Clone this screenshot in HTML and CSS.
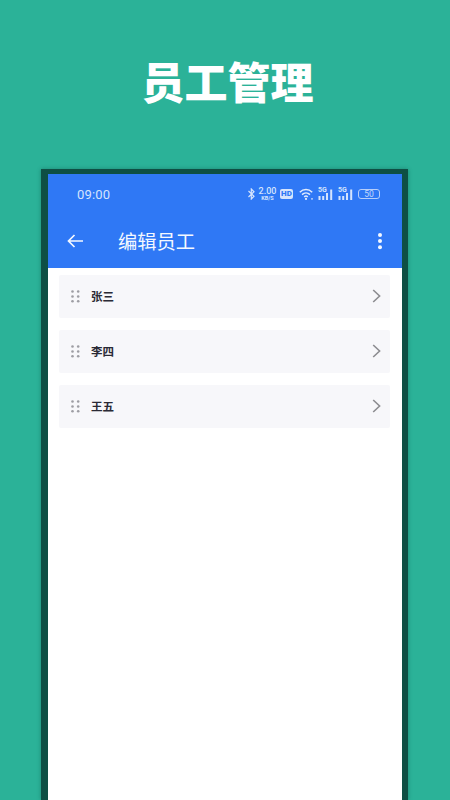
FILE: index.html
```html
<!DOCTYPE html>
<html lang="zh">
<head>
<meta charset="utf-8">
<title>员工管理</title>
<link rel="stylesheet" href="styles.css">
</head>
<body>
<header class="hero"><h1>员工管理</h1></header>
<div class="frame">
  <div class="screen">
    <div class="top">
      <div class="status">
        <span class="time">09:00</span>
        <div class="icons">
          <svg class="bt" width="7" height="12" viewBox="0 0 7 12"><path d="M0.5 3L6 8.2L3.3 11V1L6 3.8L0.5 9" fill="none" stroke="#d5e4fd" stroke-width="1.2"/></svg>
          <div class="speed"><span class="num">2.00</span><span class="unit">KB/S</span></div>
          <span class="hd">HD</span>
          <svg class="wifi" width="15" height="12" viewBox="0 0 15 12"><g fill="none" stroke="#e2ecfe" stroke-width="1.5"><path d="M0.8 4.2C4.4 .6 9.6 .6 13.2 4.2"/><path d="M3 6.6C5.3 4.4 8.7 4.4 11 6.6"/><path d="M5.2 8.8C6.4 7.8 7.6 7.8 8.8 8.8"/></g><circle cx="7" cy="10.9" r="1.1" fill="#e2ecfe"/><circle cx="13" cy="10.9" r=".8" fill="#e2ecfe"/></svg>
          <div class="sig"><span class="g">5G</span><svg width="15" height="12" viewBox="0 0 15 12"><g fill="#d5e4fd"><rect x="0.5" y="8" width="2" height="4"/><rect x="4.2" y="8" width="2" height="4"/><rect x="8" y="5" width="2" height="7"/><rect x="12.2" y="1.5" width="2" height="10.5"/></g></svg></div>
          <div class="sig"><span class="g">5G</span><svg width="15" height="12" viewBox="0 0 15 12"><g fill="#d5e4fd"><rect x="0.5" y="8" width="2" height="4"/><rect x="4.2" y="8" width="2" height="4"/><rect x="8" y="5" width="2" height="7"/><rect x="12.2" y="1.5" width="2" height="10.5"/></g></svg></div>
          <div class="batt"><span class="lvl">50</span></div>
        </div>
      </div>
      <div class="bar">
        <svg class="back" width="17" height="14" viewBox="0 0 17 14"><path d="M16 7H1.5M7.5 1L1.5 7L7.5 13" fill="none" stroke="#f4f8ff" stroke-width="1.7"/></svg>
        <span class="title">编辑员工</span>
        <svg class="more" width="6" height="18" viewBox="0 0 6 18"><circle cx="3" cy="3" r="2" fill="#f4f8ff"/><circle cx="3" cy="9" r="2" fill="#f4f8ff"/><circle cx="3" cy="15.2" r="2" fill="#f4f8ff"/></svg>
      </div>
    </div>
    <ul class="list">
      <li class="row">
        <svg class="grip" width="9" height="13" viewBox="0 0 9 13"><g fill="#9d9da3"><circle cx="1.5" cy="1.5" r="1.3"/><circle cx="7.2" cy="1.5" r="1.3"/><circle cx="1.5" cy="6.5" r="1.3"/><circle cx="7.2" cy="6.5" r="1.3"/><circle cx="1.5" cy="11.3" r="1.3"/><circle cx="7.2" cy="11.3" r="1.3"/></g></svg>
        <span class="name">张三</span>
        <svg class="chev" width="9" height="14" viewBox="0 0 9 14"><path d="M1.2 1L7.6 7L1.2 13" fill="none" stroke="#8c8c90" stroke-width="1.6"/></svg>
      </li>
      <li class="row">
        <svg class="grip" width="9" height="13" viewBox="0 0 9 13"><g fill="#9d9da3"><circle cx="1.5" cy="1.5" r="1.3"/><circle cx="7.2" cy="1.5" r="1.3"/><circle cx="1.5" cy="6.5" r="1.3"/><circle cx="7.2" cy="6.5" r="1.3"/><circle cx="1.5" cy="11.3" r="1.3"/><circle cx="7.2" cy="11.3" r="1.3"/></g></svg>
        <span class="name">李四</span>
        <svg class="chev" width="9" height="14" viewBox="0 0 9 14"><path d="M1.2 1L7.6 7L1.2 13" fill="none" stroke="#8c8c90" stroke-width="1.6"/></svg>
      </li>
      <li class="row">
        <svg class="grip" width="9" height="13" viewBox="0 0 9 13"><g fill="#9d9da3"><circle cx="1.5" cy="1.5" r="1.3"/><circle cx="7.2" cy="1.5" r="1.3"/><circle cx="1.5" cy="6.5" r="1.3"/><circle cx="7.2" cy="6.5" r="1.3"/><circle cx="1.5" cy="11.3" r="1.3"/><circle cx="7.2" cy="11.3" r="1.3"/></g></svg>
        <span class="name">王五</span>
        <svg class="chev" width="9" height="14" viewBox="0 0 9 14"><path d="M1.2 1L7.6 7L1.2 13" fill="none" stroke="#8c8c90" stroke-width="1.6"/></svg>
      </li>
    </ul>
  </div>
</div>
</body>
</html>
```
FILE: styles.css
```css
* { box-sizing: border-box; }
html, body { margin: 0; padding: 0; }
body {
  width: 450px;
  height: 800px;
  overflow: hidden;
  background: #2bb298;
  font-family: "Noto Sans CJK SC", "Noto Sans", sans-serif;
}
.hero {
  height: 169px;
  padding: 0 0 8px 5px;
  display: flex;
  align-items: center;
  justify-content: center;
}
.hero h1 {
  margin: 0;
  font-size: 43px;
  line-height: 1;
  font-weight: 900;
  color: #fff;
}
.frame {
  width: 367px;
  height: 631px;
  margin-left: 41px;
  padding: 5px 6px 0 7px;
  background: #0e4f44;
  box-shadow: 0 0 4px rgba(15, 81, 70, .45);
}
.screen { height: 100%; background: #fff; }
.top { height: 94px; background: #2f78f5; color: #fff; }
.status {
  height: 40px;
  padding: 0 22px 0 29px;
  display: flex;
  align-items: center;
  justify-content: space-between;
}
.time {
  font-family: Roboto, sans-serif;
  font-size: 13px;
  color: #d5e4fd;
  letter-spacing: .2px;
}
.icons { display: flex; align-items: center; color: #d5e4fd; }
.bt { margin-right: 4px; }
.speed {
  width: 17px;
  margin-right: 4px;
  display: flex;
  flex-direction: column;
  align-items: center;
  font-family: Roboto, sans-serif;
  line-height: 1;
}
.num { font-size: 9px; height: 7px; line-height: 7px; font-weight: 500; }
.unit { font-size: 5.5px; height: 6px; line-height: 6px; font-weight: 700; }
.hd {
  width: 13px;
  height: 10px;
  margin-right: 6px;
  border-radius: 2px;
  background: #d5e4fd;
  color: #2f78f5;
  font: 900 8px/10px Roboto, sans-serif;
  text-align: center;
}
.wifi { margin-right: 4px; }
.sig { position: relative; width: 15px; height: 12px; margin-right: 5px; }
.sig svg { display: block; }
.g {
  position: absolute;
  left: 0;
  top: -1px;
  font: 700 7px/7px Roboto, sans-serif;
}
.batt {
  width: 22px;
  height: 10px;
  border: 1px solid #b6cefa;
  border-radius: 3px;
  text-align: center;
}
.lvl { display: block; font: 400 8.5px/8px Roboto, sans-serif; color: #c4d8fb; }
.bar {
  height: 54px;
  padding: 0 19px 0 19px;
  display: flex;
  align-items: center;
}
.back { margin-right: 34px; }
.title { flex: 1; font-size: 19.25px; line-height: 1; color: #f4f8ff; margin-top: 1px; }
.list {
  list-style: none;
  margin: 0;
  padding: 7px 12px 0 11px;
  display: flex;
  flex-direction: column;
  gap: 12px;
}
.row {
  height: 43px;
  padding: 0 9px 0 12px;
  display: flex;
  align-items: center;
  background: #f7f7fa;
  border-radius: 2px;
}
.grip { margin-right: 11px; }
.name {
  flex: 1;
  font-size: 11.5px;
  line-height: 1;
  font-weight: 700;
  color: #2a2a35;
  margin-top: 1px;
}
.chev { margin-top: -1px; }
```
